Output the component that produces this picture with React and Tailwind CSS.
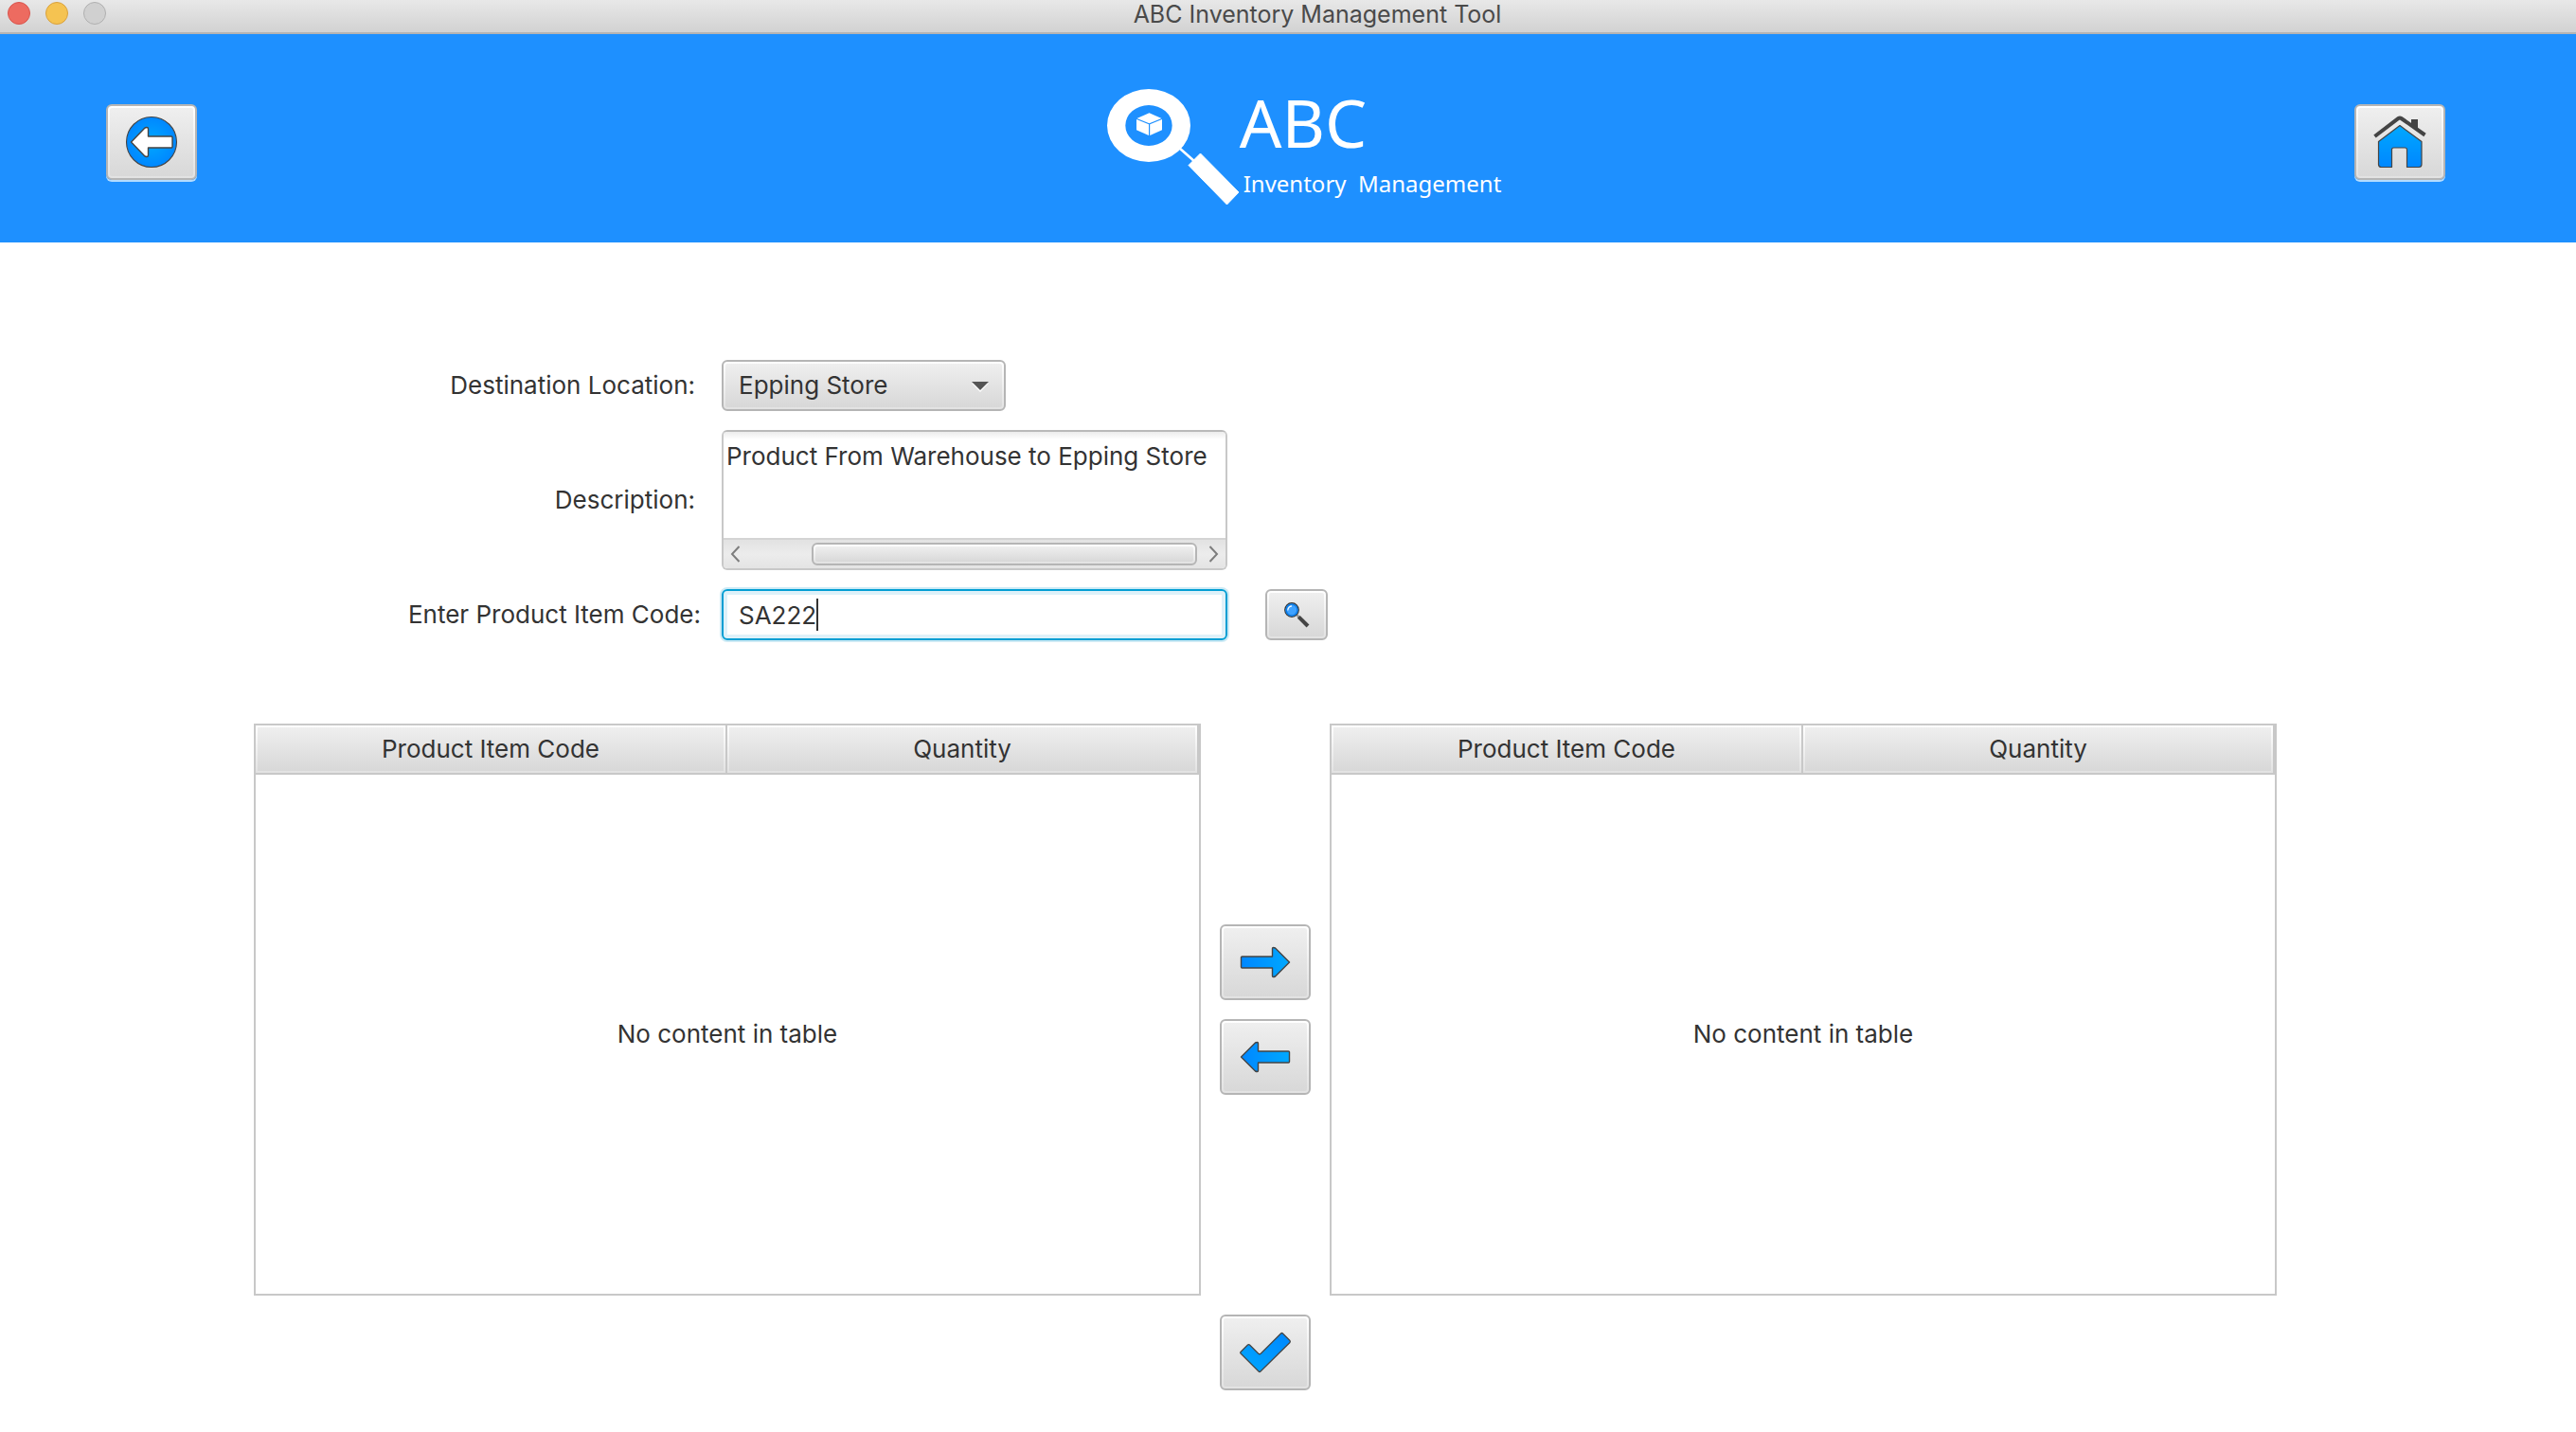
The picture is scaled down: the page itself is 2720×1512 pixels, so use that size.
import React from "react";

const FACE = "bg-linear-to-b from-[#efefef] to-[#d8d8d8]";
const BEVEL = "border-2 border-[#b5b5b5] bg-linear-to-b from-white to-[#e2e2e2] p-0.5";

function IconButton({ label, className = "", children }) {
  return (
    <button type="button" aria-label={label} className={`${BEVEL} shrink-0 rounded-md ${className}`}>
      <span className={`${FACE} flex size-full items-center justify-center rounded-xs`}>{children}</span>
    </button>
  );
}

const ARROW =
  "M53.5 28 L38.5 13 Q37.5 12.5 36.5 12.5 Q35.5 12.5 35.5 13.5 V22 H3.5 Q2.5 22 2.5 23 V33 Q2.5 34 3.5 34 H35.5 V42.5 Q35.5 43.5 36.5 43.5 Q37.5 43.5 38.5 43 Z";

function ArrowRightIcon() {
  return (
    <svg viewBox="0 0 56 56" className="size-14" aria-hidden="true">
      <defs>
        <linearGradient id="arrowRight" x1="0" x2="1" y1="0" y2="0">
          <stop offset="0" stopColor="#0087ff" />
          <stop offset="1" stopColor="#00a8ff" />
        </linearGradient>
      </defs>
      <path d={ARROW} fill="url(#arrowRight)" stroke="#444" strokeWidth="1.4" strokeLinejoin="round" />
    </svg>
  );
}

function ArrowLeftIcon() {
  return (
    <svg viewBox="0 0 56 56" className="size-14" aria-hidden="true">
      <defs>
        <linearGradient id="arrowLeft" x1="1" x2="0" y1="0" y2="0">
          <stop offset="0" stopColor="#0087ff" />
          <stop offset="1" stopColor="#00a8ff" />
        </linearGradient>
      </defs>
      <path d={ARROW} transform="matrix(-1 0 0 1 56 0)" fill="url(#arrowLeft)" stroke="#444" strokeWidth="1.4" strokeLinejoin="round" />
    </svg>
  );
}

function BackIcon() {
  return (
    <svg viewBox="0 0 56 56" className="size-14" aria-hidden="true">
      <defs>
        <radialGradient id="backDisc">
          <stop offset="0" stopColor="#00a8ff" />
          <stop offset="1" stopColor="#0087ff" />
        </radialGradient>
      </defs>
      <circle cx="28" cy="28" r="26.5" fill="url(#backDisc)" stroke="#444" strokeWidth="1.1" />
      <path
        d="M6.5 28 L20.5 13.5 Q21.5 12.5 23 12.5 Q24.5 12.5 24.5 14 V22 H49 Q50 22 50 23 V33 Q50 34 49 34 H24.5 V42 Q24.5 43.5 23 43.5 Q21.5 43.5 20.5 42.5 Z"
        fill="#fff"
        stroke="#444"
        strokeWidth="1.4"
        strokeLinejoin="round"
      />
    </svg>
  );
}

function HomeIcon() {
  return (
    <svg viewBox="0 0 56 56" className="size-14" aria-hidden="true">
      <defs>
        <linearGradient id="house" x1="0" x2="0" y1="0" y2="1">
          <stop offset="0" stopColor="#00a8ff" />
          <stop offset="1" stopColor="#0087ff" />
        </linearGradient>
      </defs>
      <path d="M40 4 H47 V15 L40 10 Z" fill="#444" />
      <path d="M1.5 22 L26.5 3 Q28 2 29.5 3 L54.5 20.5" fill="none" stroke="#444" strokeWidth="4" />
      <path
        d="M28 10.5 L51 27.5 V51.5 Q51 54.5 48 54.5 H35.5 V36 Q35.5 34 33.5 34 H21.5 Q19.5 34 19.5 36 V54.5 H8.5 Q5.5 54.5 5.5 51.5 V27.5 Z"
        fill="url(#house)"
        stroke="#444"
        strokeWidth="1.2"
        strokeLinejoin="round"
      />
    </svg>
  );
}

function SearchIcon() {
  return (
    <svg viewBox="0 0 32 32" className="size-8" aria-hidden="true">
      <path d="M16.5 16.5 L19 19" stroke="#999" strokeWidth="2.5" />
      <path d="M18.3 18.3 L28 28" stroke="#444" strokeWidth="4" />
      <circle cx="11" cy="11" r="7.3" fill="#3fa2ff" stroke="#333" strokeWidth="1.2" />
      <circle cx="11" cy="11" r="5.9" fill="none" stroke="#0a7be6" strokeWidth="1.4" />
      <path d="M6.8 11.5 Q7 7.5 11 6.8" fill="none" stroke="#fff" strokeWidth="1.2" />
    </svg>
  );
}

function CheckIcon() {
  return (
    <svg viewBox="0 0 56 56" className="size-14" aria-hidden="true">
      <defs>
        <linearGradient id="check" x1="0" x2="1" y1="1" y2="0">
          <stop offset="0" stopColor="#00a8ff" />
          <stop offset="1" stopColor="#0087ff" />
        </linearGradient>
      </defs>
      <path
        d="M2 27.5 L9.5 20 Q10.5 19 11.5 20 L20.5 29 Q22 30.5 23.5 29 L44.5 8 Q45.5 7 46.5 8 L54 15.5 Q54.7 16.5 54 17.5 L23 48 Q22 49 21 48 L2 29 Q1.2 28 2 27.5 Z"
        fill="url(#check)"
        stroke="#444"
        strokeWidth="1.2"
        strokeLinejoin="round"
      />
    </svg>
  );
}

function LogoMark() {
  return (
    <svg viewBox="0 0 140 124" className="h-[124px] w-[140px] shrink-0" aria-hidden="true">
      <path
        fill="#fff"
        fillRule="evenodd"
        d="M0 38.5 a44 38.5 0 1 0 88 0 a44 38.5 0 1 0 -88 0 Z M19.3 38.5 a24.7 21.5 0 1 0 49.4 0 a24.7 21.5 0 1 0 -49.4 0 Z"
      />
      <path d="M44.5 25.3 L57.5 31 L44.5 36.3 L31.5 31 Z" fill="#fff" />
      <path d="M31 32 L44 37.3 V49 L31 43.3 Z" fill="#fff" />
      <path d="M58 32 L45.2 37.3 V49 L58 43.3 Z" fill="#fff" />
      <path d="M76 62 L93 77" stroke="#fff" strokeWidth="2.6" />
      <path d="M98.5 68 L139 109 L126.5 122 L86 80.5 Z" fill="#fff" stroke="#fff" strokeWidth="1" strokeLinejoin="round" />
    </svg>
  );
}

function TitleBar() {
  return (
    <div className="flex h-9 items-start border-b-2 border-[#b4b4b4] bg-linear-to-b from-[#e8e8e8] to-[#d2d2d2] pr-[50px] pl-2">
      <div className="flex gap-4 pt-0.5">
        <button type="button" aria-label="Close" className="size-6 rounded-full border border-[#d9544d] bg-[#ed6b60]" />
        <button type="button" aria-label="Minimize" className="size-6 rounded-full border border-[#d9a13c] bg-[#f5c351]" />
        <button type="button" aria-label="Zoom" disabled className="size-6 rounded-full border border-[#b0b0b0] bg-[#d0d0d0]" />
      </div>
      <h1 className="flex-1 text-center text-[25px] leading-[30px] text-[#4a4a4a]">ABC Inventory Management Tool</h1>
    </div>
  );
}

function Header() {
  return (
    <header className="flex h-[220px] items-start justify-between bg-[#1e90ff] pr-[138px] pl-28">
      <IconButton label="Back" className="mt-[74px] h-20 w-24 shadow-[0_2px_0_#b4dcff]">
        <BackIcon />
      </IconButton>
      <div className="flex pt-[58px] pl-[60px] text-white">
        <LogoMark />
        <div className="flex flex-col font-['Noto_Sans',sans-serif]">
          <span className="text-[70px] leading-[70px]">ABC</span>
          <span className="pt-3 pl-1 text-[24px] leading-9 whitespace-pre">Inventory  Management</span>
        </div>
      </div>
      <IconButton label="Home" className="mt-[74px] h-20 w-24 shadow-[0_2px_0_#b4dcff]">
        <HomeIcon />
      </IconButton>
    </header>
  );
}

function ScrollBar() {
  return (
    <div className="flex h-8 items-center border-t-2 border-[#d4d4d4] bg-linear-to-b from-[#e2e2e2] via-[#ececec] to-[#e4e4e4] px-1.5">
      <svg viewBox="0 0 12 20" className="h-5 w-3" aria-hidden="true">
        <path d="M10.5 2 L3 10 L10.5 18" fill="none" stroke="#7d7d7d" strokeWidth="2" />
      </svg>
      <div className={`${BEVEL} mr-3 ml-[75px] h-6 flex-1 rounded-md`}>
        <div className={`${FACE} size-full rounded-xs`} />
      </div>
      <svg viewBox="0 0 12 20" className="h-5 w-3" aria-hidden="true">
        <path d="M1.5 2 L9 10 L1.5 18" fill="none" stroke="#7d7d7d" strokeWidth="2" />
      </svg>
    </div>
  );
}

function TransferForm() {
  return (
    <form className="grid grid-cols-[472px_534px_66px] items-center gap-y-5 text-[#333]">
      <label htmlFor="destination" className="pr-1.5 text-right">Destination Location:</label>
      <div className={`${BEVEL} relative ml-[22px] h-[54px] w-[300px] rounded-md`}>
        <select id="destination" defaultValue="Epping Store" className={`${FACE} size-full appearance-none rounded-xs pr-12 pl-3.5 outline-none`}>
          <option>Epping Store</option>
        </select>
        <svg viewBox="0 0 18 12" className="pointer-events-none absolute top-5 right-4 h-3 w-[18px]" aria-hidden="true">
          <path d="M0 2.5 H18 L9 12 Z" fill="#fff" />
          <path d="M0 1 H18 L9 10 Z" fill="#555" />
        </svg>
      </div>
      <span />

      <label htmlFor="description" className="pr-1.5 text-right">Description:</label>
      <div className="ml-[22px] h-[148px] w-[534px] overflow-hidden rounded-md border-2 border-[#c8c8c8] border-t-[#b9b9b9]">
        <textarea
          id="description"
          wrap="off"
          defaultValue="Product From Warehouse to Epping Store"
          className="block h-28 w-full resize-none overflow-hidden bg-linear-to-b from-[#ececec] to-white to-[8px] px-[3px] pt-2.5 leading-8 outline-none"
        />
        <ScrollBar />
      </div>
      <span />

      <label htmlFor="item-code" className="text-right">Enter Product Item Code:</label>
      <div className="relative ml-[22px] h-[54px] w-[534px]">
        <input
          id="item-code"
          type="text"
          defaultValue="SA222"
          className="size-full rounded-md border-2 border-[#039ed3] px-4 shadow-[0_0_0_2px_#cdeaf5,inset_0_0_0_4px_#def1f9] outline-none"
        />
        <span className="absolute top-2.5 left-[100px] h-[34px] w-0.5 bg-[#333]" />
      </div>
      <IconButton label="Find product" className="ml-[62px] h-[54px] w-[66px]">
        <SearchIcon />
      </IconButton>
    </form>
  );
}

function HeaderCell({ children, className = "" }) {
  return (
    <th scope="col" className={`h-[50px] p-0 font-normal ${className}`}>
      <div className="h-[50px] bg-linear-to-b from-white to-[#e2e2e2] p-0.5">
        <div className={`${FACE} flex size-full items-center justify-center`}>{children}</div>
      </div>
    </th>
  );
}

function ItemTable({ label }) {
  return (
    <div className="min-w-0 flex-1 border-2 border-[#c8c8c8]">
      <table aria-label={label} className="w-full table-fixed border-separate border-spacing-0 text-[#333]">
        <thead>
          <tr>
            <HeaderCell className="border-r-2 border-b-2 border-[#c8c8c8]">Product Item Code</HeaderCell>
            <HeaderCell className="border-r-2 border-b-2 border-[#c8c8c8]">Quantity</HeaderCell>
          </tr>
        </thead>
        <tbody>
          <tr>
            <td colSpan={2} className="h-[548px] p-0 text-center">No content in table</td>
          </tr>
        </tbody>
      </table>
    </div>
  );
}

export default function App() {
  return (
    <div className="min-h-screen bg-white font-[Inter,sans-serif] text-[26px] leading-8">
      <TitleBar />
      <Header />
      <main className="pt-[124px] pr-[316px] pb-11 pl-[268px]">
        <TransferForm />
        <div className="mt-[88px] flex">
          <ItemTable label="Available products" />
          <div className="flex w-[136px] flex-col items-center justify-center gap-5">
            <IconButton label="Move right" className="h-20 w-24">
              <ArrowRightIcon />
            </IconButton>
            <IconButton label="Move left" className="h-20 w-24">
              <ArrowLeftIcon />
            </IconButton>
          </div>
          <ItemTable label="Selected products" />
        </div>
        <div className="mt-5 flex justify-center">
          <IconButton label="Confirm transfer" className="h-20 w-24">
            <CheckIcon />
          </IconButton>
        </div>
      </main>
    </div>
  );
}
